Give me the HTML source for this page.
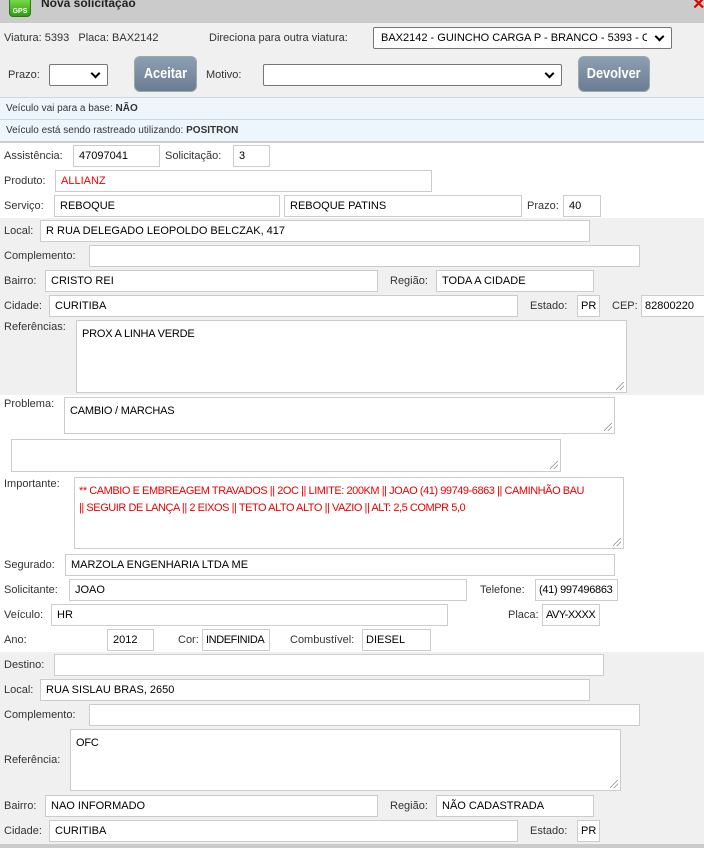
<!DOCTYPE html>
<html><head><meta charset="utf-8"><style>
*{box-sizing:border-box;margin:0;padding:0}
body{width:704px;height:848px;overflow:hidden;background:#fff;font-family:"Liberation Sans",sans-serif;font-size:11px;color:#333;position:relative}
.a{position:absolute;white-space:nowrap}
.i{position:absolute;background:#fff;border:1px solid #ccc;color:#000;padding:0 4px 0 5px;font-size:11px;line-height:20px;white-space:nowrap;overflow:hidden;height:22px}
.t{position:absolute;background:#fff;border:1px solid #ccc;color:#000;padding:5px 5px;font-size:11px;line-height:17px;letter-spacing:-.2px}
.t:after{content:"";position:absolute;right:2px;bottom:2px;width:8px;height:8px;background:linear-gradient(135deg,transparent 45%,#888 45%,#888 52%,transparent 52%,transparent 70%,#888 70%,#888 77%,transparent 77%)}
.g{position:absolute;left:0;width:704px;background:#f0f0f0}
.sel{position:absolute;background:#fff;border:1px solid #767676;border-radius:2px;color:#000;font-size:11px;line-height:20px}
.sel span{position:absolute;left:7px;top:0;right:24px;overflow:hidden;white-space:nowrap}
.sel:after{content:"";position:absolute;right:8px;top:5px;width:5px;height:5px;border-right:2px solid #000;border-bottom:2px solid #000;transform:rotate(45deg)}
.btn{position:absolute;border-radius:6px;background:linear-gradient(#8e9fb3,#6b7d93);color:#fff;font-weight:bold;font-size:15px;text-align:center;line-height:34px;border:1px solid #9aa;overflow:hidden}
.btn span{display:inline-block;transform:scaleX(.85)}
.inf{position:absolute;left:0;width:704px;height:23px;background:#eef6fd;border-top:1px solid #cfd8e0;font-size:10px;padding:5px 6px;color:#333}
</style></head><body>
<div class="g" style="top:0;height:23px;background:#cbcbcb"></div>
<div class="a" style="left:9px;top:-3px;width:22px;height:20px;background:linear-gradient(#7fe04a,#2f9a14);border-radius:4px;border:1px solid #2a7a10;color:#fff;font-size:7px;font-weight:bold;text-align:center;padding-top:10px">GPS</div>
<div class="a" style="left:41px;top:-4px;font-size:12px;font-weight:bold;color:#222">Nova solicitação</div>
<div class="a" style="left:692px;top:-6px;color:#d00;font-weight:bold;font-size:16px">✕</div>
<div class="g" style="top:23px;height:74px"></div>
<div class="a" style="left:4px;top:32px">Viatura: 5393 &nbsp; Placa: BAX2142</div>
<div class="a" style="left:209px;top:32px">Direciona para outra viatura:</div>
<div class="sel" style="left:373px;top:27px;width:299px;height:22px"><span>BAX2142 - GUINCHO CARGA P - BRANCO - 5393 - CAMINHAO</span></div>
<div class="a" style="left:8px;top:69px">Prazo:</div>
<div class="sel" style="left:49px;top:64px;width:59px;height:22px"></div>
<div class="btn" style="left:134px;top:56px;width:63px;height:36px"><span>Aceitar</span></div>
<div class="a" style="left:206px;top:69px">Motivo:</div>
<div class="sel" style="left:263px;top:64px;width:299px;height:22px"></div>
<div class="btn" style="left:578px;top:56px;width:72px;height:36px"><span>Devolver</span></div>
<div class="inf" style="top:97px">Veículo vai para a base: <b>NÃO</b></div>
<div class="inf" style="top:119px">Veículo está sendo rastreado utilizando: <b>POSITRON</b></div>
<div class="a" style="left:0;top:141px;width:704px;height:2px;background:#ccc"></div>

<div class="a" style="left:4px;top:150px">Assistência:</div><div class="i" style="left:73px;top:145px;width:87px">47097041</div>
<div class="a" style="left:165px;top:150px">Solicitação:</div><div class="i" style="left:233px;top:145px;width:37px">3</div>
<div class="a" style="left:4px;top:175px">Produto:</div><div class="i" style="left:55px;top:170px;width:377px;color:#e00">ALLIANZ</div>
<div class="a" style="left:4px;top:200px">Serviço:</div><div class="i" style="left:54px;top:195px;width:226px">REBOQUE</div>
<div class="i" style="left:284px;top:195px;width:238px">REBOQUE PATINS</div>
<div class="a" style="left:527px;top:200px">Prazo:</div><div class="i" style="left:563px;top:195px;width:38px">40</div>

<div class="g" style="top:218px;height:177px"></div>
<div class="a" style="left:4px;top:225px">Local:</div><div class="i" style="left:40px;top:220px;width:550px">R RUA DELEGADO LEOPOLDO BELCZAK, 417</div>
<div class="a" style="left:4px;top:250px">Complemento:</div><div class="i" style="left:89px;top:245px;width:551px"></div>
<div class="a" style="left:4px;top:275px">Bairro:</div><div class="i" style="left:45px;top:270px;width:333px">CRISTO REI</div>
<div class="a" style="left:390px;top:275px">Região:</div><div class="i" style="left:436px;top:270px;width:158px">TODA A CIDADE</div>
<div class="a" style="left:4px;top:300px">Cidade:</div><div class="i" style="left:49px;top:295px;width:469px">CURITIBA</div>
<div class="a" style="left:530px;top:300px">Estado:</div><div class="i" style="left:577px;top:295px;width:23px;padding-left:3px">PR</div>
<div class="a" style="left:612px;top:300px">CEP:</div><div class="i" style="left:641px;top:295px;width:70px;padding-left:3px">82800220</div>
<div class="a" style="left:4px;top:321px">Referências:</div><div class="t" style="left:76px;top:320px;width:551px;height:73px">PROX A LINHA VERDE</div>

<div class="a" style="left:4px;top:398px">Problema:</div><div class="t" style="left:64px;top:397px;width:551px;height:37px">CAMBIO / MARCHAS</div>
<div class="t" style="left:11px;top:439px;width:550px;height:33px"></div>
<div class="a" style="left:4px;top:478px">Importante:</div><div class="t" style="left:74px;top:477px;width:550px;height:72px;color:#e00;font-size:11px;letter-spacing:-.45px;padding-left:4px;white-space:nowrap;overflow:hidden">** CAMBIO E EMBREAGEM TRAVADOS || 2OC || LIMITE: 200KM || JOAO (41) 99749-6863 || CAMINHÃO BAU<br>|| SEGUIR DE LANÇA || 2 EIXOS || TETO ALTO ALTO || VAZIO || ALT: 2,5 COMPR 5,0</div>

<div class="a" style="left:4px;top:559px">Segurado:</div><div class="i" style="left:65px;top:554px;width:550px">MARZOLA ENGENHARIA LTDA ME</div>
<div class="a" style="left:4px;top:584px">Solicitante:</div><div class="i" style="left:69px;top:579px;width:398px">JOAO</div>
<div class="a" style="left:480px;top:584px">Telefone:</div><div class="i" style="left:535px;top:579px;width:83px;padding-left:3px;letter-spacing:-.3px">(41) 997496863</div>
<div class="a" style="left:4px;top:609px">Veículo:</div><div class="i" style="left:51px;top:604px;width:397px">HR</div>
<div class="a" style="left:508px;top:609px">Placa:</div><div class="i" style="left:542px;top:604px;width:58px;padding-left:3px;letter-spacing:-.5px">AVY-XXXX</div>
<div class="a" style="left:4px;top:634px">Ano:</div><div class="i" style="left:107px;top:629px;width:47px">2012</div>
<div class="a" style="left:178px;top:634px">Cor:</div><div class="i" style="left:202px;top:629px;width:68px;padding-left:3px;letter-spacing:-.4px">INDEFINIDA</div>
<div class="a" style="left:290px;top:634px">Combustível:</div><div class="i" style="left:362px;top:629px;width:69px;padding-left:3px">DIESEL</div>

<div class="g" style="top:652px;height:192px"></div>
<div class="a" style="left:4px;top:659px">Destino:</div><div class="i" style="left:54px;top:654px;width:550px"></div>
<div class="a" style="left:4px;top:684px">Local:</div><div class="i" style="left:40px;top:679px;width:550px">RUA SISLAU BRAS, 2650</div>
<div class="a" style="left:4px;top:709px">Complemento:</div><div class="i" style="left:89px;top:704px;width:551px"></div>
<div class="a" style="left:4px;top:754px">Referência:</div><div class="t" style="left:70px;top:729px;width:551px;height:62px">OFC</div>
<div class="a" style="left:4px;top:800px">Bairro:</div><div class="i" style="left:45px;top:795px;width:333px">NAO INFORMADO</div>
<div class="a" style="left:390px;top:800px">Região:</div><div class="i" style="left:436px;top:795px;width:158px">NÃO CADASTRADA</div>
<div class="a" style="left:4px;top:825px">Cidade:</div><div class="i" style="left:49px;top:820px;width:469px">CURITIBA</div>
<div class="a" style="left:530px;top:825px">Estado:</div><div class="i" style="left:577px;top:820px;width:23px;padding-left:3px">PR</div>
<div class="g" style="top:844px;height:4px;background:#cbcbcb"></div>
</body></html>
